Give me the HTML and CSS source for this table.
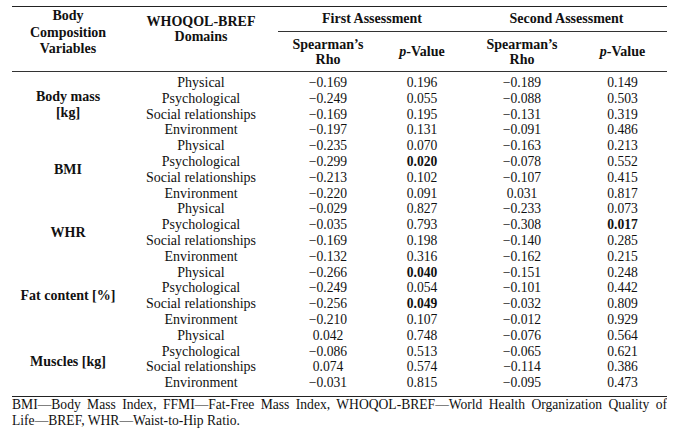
FILE: index.html
```html
<!DOCTYPE html>
<html lang="en">
<head>
<meta charset="utf-8">
<link rel="stylesheet" href="styles.css">
</head>
<body>
<table class="tbl">
  <colgroup>
    <col class="c1"><col class="c2"><col class="c3"><col class="c4"><col class="c5"><col class="c6">
  </colgroup>
  <thead>
    <tr class="h1">
      <th rowspan="2" class="var">Body<br>Composition<br>Variables</th>
      <th rowspan="2" class="dom">WHOQOL-BREF<br>Domains</th>
      <th colspan="2" class="grp">First Assessment</th>
      <th colspan="2" class="grp">Second Assessment</th>
    </tr>
    <tr class="h2">
      <th class="sub">Spearman’s<br>Rho</th>
      <th class="sub"><i>p</i>-Value</th>
      <th class="sub">Spearman’s<br>Rho</th>
      <th class="sub"><i>p</i>-Value</th>
    </tr>
  </thead>
  <tbody>
    <tr class="first"><th rowspan="4" class="lab">Body mass<br>[kg]</th><td>Physical</td><td>−0.169</td><td>0.196</td><td>−0.189</td><td>0.149</td></tr>
    <tr><td>Psychological</td><td>−0.249</td><td>0.055</td><td>−0.088</td><td>0.503</td></tr>
    <tr><td>Social relationships</td><td>−0.169</td><td>0.195</td><td>−0.131</td><td>0.319</td></tr>
    <tr><td>Environment</td><td>−0.197</td><td>0.131</td><td>−0.091</td><td>0.486</td></tr>
    <tr><th rowspan="4" class="lab">BMI</th><td>Physical</td><td>−0.235</td><td>0.070</td><td>−0.163</td><td>0.213</td></tr>
    <tr><td>Psychological</td><td>−0.299</td><td><b>0.020</b></td><td>−0.078</td><td>0.552</td></tr>
    <tr><td>Social relationships</td><td>−0.213</td><td>0.102</td><td>−0.107</td><td>0.415</td></tr>
    <tr><td>Environment</td><td>−0.220</td><td>0.091</td><td>0.031</td><td>0.817</td></tr>
    <tr><th rowspan="4" class="lab">WHR</th><td>Physical</td><td>−0.029</td><td>0.827</td><td>−0.233</td><td>0.073</td></tr>
    <tr><td>Psychological</td><td>−0.035</td><td>0.793</td><td>−0.308</td><td><b>0.017</b></td></tr>
    <tr><td>Social relationships</td><td>−0.169</td><td>0.198</td><td>−0.140</td><td>0.285</td></tr>
    <tr><td>Environment</td><td>−0.132</td><td>0.316</td><td>−0.162</td><td>0.215</td></tr>
    <tr><th rowspan="4" class="lab">Fat content [%]</th><td>Physical</td><td>−0.266</td><td><b>0.040</b></td><td>−0.151</td><td>0.248</td></tr>
    <tr><td>Psychological</td><td>−0.249</td><td>0.054</td><td>−0.101</td><td>0.442</td></tr>
    <tr><td>Social relationships</td><td>−0.256</td><td><b>0.049</b></td><td>−0.032</td><td>0.809</td></tr>
    <tr><td>Environment</td><td>−0.210</td><td>0.107</td><td>−0.012</td><td>0.929</td></tr>
    <tr><th rowspan="4" class="lab">Muscles [kg]</th><td>Physical</td><td>0.042</td><td>0.748</td><td>−0.076</td><td>0.564</td></tr>
    <tr><td>Psychological</td><td>−0.086</td><td>0.513</td><td>−0.065</td><td>0.621</td></tr>
    <tr><td>Social relationships</td><td>0.074</td><td>0.574</td><td>−0.114</td><td>0.386</td></tr>
    <tr class="last"><td>Environment</td><td>−0.031</td><td>0.815</td><td>−0.095</td><td>0.473</td></tr>
  </tbody>
</table>
<p class="note">BMI—Body Mass Index, FFMI—Fat-Free Mass Index, WHOQOL-BREF—World Health Organization Quality of Life&#8288;—&#8288;BREF, WHR—Waist-to-Hip Ratio.</p>
</body>
</html>
```
FILE: styles.css
```css
html, body {
  background: #fff;
}
body {
  margin: 6px 0 0 12px;
  width: 655px;
  font-family: "Liberation Serif", "Times New Roman", serif;
  font-size: 14px;
  color: #111;
}
.tbl {
  width: 655px;
  table-layout: fixed;
  border-collapse: separate;
  border-spacing: 0;
  border-top: 1.5px solid #222;
  border-bottom: 1.5px solid #222;
}
.c1 { width: 112px; }
.c2 { width: 154px; }
.c3 { width: 100px; }
.c4 { width: 88px; }
.c5 { width: 112px; }
.c6 { width: 89px; }

th, td {
  padding: 0;
  text-align: center;
  font-weight: normal;
}
thead th {
  font-weight: bold;
}
.h1 { height: 25px; }
.h2 { height: 40px; }
.grp {
  border-bottom: 1px solid #333;
  vertical-align: middle;
  line-height: 16px;
}
.sub {
  border-bottom: 1px solid #333;
  vertical-align: middle;
  line-height: 15.5px;
  padding-top: 1px;
}
.var {
  vertical-align: top;
  padding-top: 1px;
  line-height: 16.5px;
  border-bottom: 1px solid #333;
}
.dom {
  vertical-align: top;
  padding-top: 6.5px;
  line-height: 15px;
  border-bottom: 1px solid #333;
}
tbody tr { height: 15.8px; }
tbody td {
  line-height: 15.8px;
  vertical-align: top;
  font-size: 13.6px;
}
tbody td:first-of-type {
  font-size: 14px;
}
.lab {
  font-weight: bold;
  vertical-align: middle;
  line-height: 16px;
}
tbody tr.first { height: 18.8px; }
tbody tr.first td { padding-top: 3px; }
tbody tr.last { height: 20.5px; }
.note {
  margin: 0;
  line-height: 16px;
  font-size: 13.6px;
  text-align: justify;
}
```
